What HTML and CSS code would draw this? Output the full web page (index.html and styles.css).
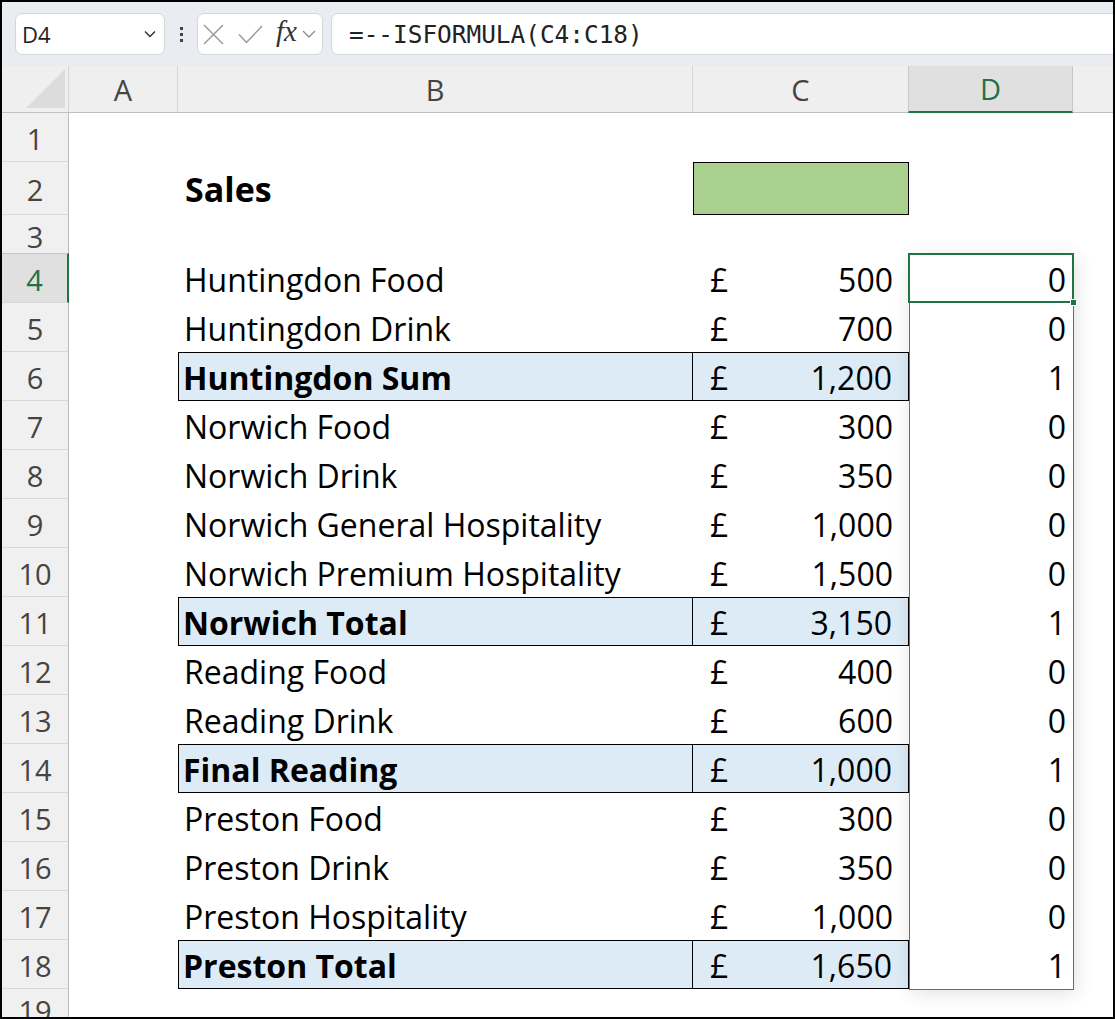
FILE: index.html
```html
<!DOCTYPE html>
<html>
<head>
<meta charset="utf-8">
<link rel="stylesheet" href="styles.css">
</head>
<body>
<div class="frame">
  <div class="fbar">
    <div class="namebox">
      <span class="nb-text">D4</span>
      <svg class="nb-chev" width="12" height="8" viewBox="0 0 12 8"><path d="M1 1.5 L6 6.5 L11 1.5" fill="none" stroke="#333" stroke-width="1.5"/></svg>
    </div>
    <div class="dots"><i></i><i></i><i></i></div>
    <div class="fxbox">
      <svg class="ic-x" width="21" height="21" viewBox="0 0 21 21"><path d="M1 1 L20 20 M20 1 L1 20" stroke="#9a9a9a" stroke-width="1.5" fill="none"/></svg>
      <svg class="ic-check" width="25" height="20" viewBox="0 0 25 20"><path d="M1 10.5 L8.5 18.5 L24 2" stroke="#9a9a9a" stroke-width="1.5" fill="none"/></svg>
      <span class="fx">fx</span>
      <svg class="fx-chev" width="14" height="8" viewBox="0 0 14 8"><path d="M1 1 L7 7 L13 1" fill="none" stroke="#8c8c8c" stroke-width="1.3"/></svg>
    </div>
    <div class="formula">=--ISFORMULA(C4:C18)</div>
  </div>

  <div class="sheet">
    <div class="row hdr">
      <div class="corner"><svg width="40" height="40" viewBox="0 0 40 40"><path d="M0 39 L39 0 L39 39 Z" fill="#dcdcdc"/></svg></div>
      <div class="ch">A</div>
      <div class="ch">B</div>
      <div class="ch">C</div>
      <div class="ch sel">D</div>
      <div class="ch last"></div>
    </div>

    <div class="row r1"><div class="rh">1</div><div class="c"></div><div class="c"></div><div class="c"></div><div class="c"></div><div class="c"></div></div>
    <div class="row r2"><div class="rh">2</div><div class="c"></div><div class="c b title">Sales</div><div class="c green"></div><div class="c"></div><div class="c"></div></div>
    <div class="row r3"><div class="rh">3</div><div class="c"></div><div class="c"></div><div class="c"></div><div class="c"></div><div class="c"></div></div>

    <div class="row"><div class="rh sel">4</div><div class="c"></div><div class="c b">Huntingdon Food</div><div class="c cc"><span>£</span><span>500</span></div><div class="c d">0</div><div class="c"></div></div>
    <div class="row"><div class="rh">5</div><div class="c"></div><div class="c b">Huntingdon Drink</div><div class="c cc"><span>£</span><span>700</span></div><div class="c d">0</div><div class="c"></div></div>
    <div class="row tot"><div class="rh">6</div><div class="c"></div><div class="c b">Huntingdon Sum</div><div class="c cc"><span>£</span><span>1,200</span></div><div class="c d">1</div><div class="c"></div></div>
    <div class="row"><div class="rh">7</div><div class="c"></div><div class="c b">Norwich Food</div><div class="c cc"><span>£</span><span>300</span></div><div class="c d">0</div><div class="c"></div></div>
    <div class="row"><div class="rh">8</div><div class="c"></div><div class="c b">Norwich Drink</div><div class="c cc"><span>£</span><span>350</span></div><div class="c d">0</div><div class="c"></div></div>
    <div class="row"><div class="rh">9</div><div class="c"></div><div class="c b">Norwich General Hospitality</div><div class="c cc"><span>£</span><span>1,000</span></div><div class="c d">0</div><div class="c"></div></div>
    <div class="row"><div class="rh">10</div><div class="c"></div><div class="c b">Norwich Premium Hospitality</div><div class="c cc"><span>£</span><span>1,500</span></div><div class="c d">0</div><div class="c"></div></div>
    <div class="row tot"><div class="rh">11</div><div class="c"></div><div class="c b">Norwich Total</div><div class="c cc"><span>£</span><span>3,150</span></div><div class="c d">1</div><div class="c"></div></div>
    <div class="row"><div class="rh">12</div><div class="c"></div><div class="c b">Reading Food</div><div class="c cc"><span>£</span><span>400</span></div><div class="c d">0</div><div class="c"></div></div>
    <div class="row"><div class="rh">13</div><div class="c"></div><div class="c b">Reading Drink</div><div class="c cc"><span>£</span><span>600</span></div><div class="c d">0</div><div class="c"></div></div>
    <div class="row tot"><div class="rh">14</div><div class="c"></div><div class="c b">Final Reading</div><div class="c cc"><span>£</span><span>1,000</span></div><div class="c d">1</div><div class="c"></div></div>
    <div class="row"><div class="rh">15</div><div class="c"></div><div class="c b">Preston Food</div><div class="c cc"><span>£</span><span>300</span></div><div class="c d">0</div><div class="c"></div></div>
    <div class="row"><div class="rh">16</div><div class="c"></div><div class="c b">Preston Drink</div><div class="c cc"><span>£</span><span>350</span></div><div class="c d">0</div><div class="c"></div></div>
    <div class="row"><div class="rh">17</div><div class="c"></div><div class="c b">Preston Hospitality</div><div class="c cc"><span>£</span><span>1,000</span></div><div class="c d">0</div><div class="c"></div></div>
    <div class="row tot"><div class="rh">18</div><div class="c"></div><div class="c b">Preston Total</div><div class="c cc"><span>£</span><span>1,650</span></div><div class="c d">1</div><div class="c"></div></div>
    <div class="row r19"><div class="rh">19</div><div class="c"></div><div class="c"></div><div class="c"></div><div class="c"></div><div class="c"></div></div>

    <div class="spill"></div>
    <div class="active"></div>
    <div class="handle"></div>
  </div>
</div>
</body>
</html>
```

FILE: styles.css
```css
* { box-sizing: border-box; }
html, body { margin: 0; padding: 0; background: #fff; }
.frame {
  width: 1115px;
  height: 1019px;
  border: 2px solid #000;
  overflow: hidden;
  background: #fff;
  font-family: "Open Sans", sans-serif;
}

/* formula bar */
.fbar {
  height: 64px;
  background: #e9ecf0;
  display: flex;
  align-items: flex-start;
  padding: 11px 0 0 13px;
}
.namebox {
  width: 150px;
  height: 42px;
  background: #fff;
  border: 1px solid #d3d6da;
  border-radius: 7px;
  display: flex;
  align-items: center;
  justify-content: space-between;
  padding: 0 8px 0 6px;
}
.nb-text { font-size: 22px; color: #222; }
.dots {
  width: 32px;
  height: 42px;
  display: flex;
  flex-direction: column;
  align-items: center;
  justify-content: center;
  gap: 3px;
}
.dots i { display: block; width: 3px; height: 3px; background: #444; }
.fxbox {
  width: 126px;
  height: 42px;
  background: #fff;
  border: 1px solid #d3d6da;
  border-radius: 7px;
  display: flex;
  align-items: center;
  padding-left: 5px;
}
.ic-x { margin-right: 14px; }
.ic-check { margin-right: 13px; }
.fx {
  font-family: "Liberation Serif", "DejaVu Serif", serif;
  font-style: italic;
  font-size: 29px;
  color: #333;
  margin-right: 5px;
  line-height: 1;
  margin-top: -5px;
}
.formula {
  flex: 1;
  height: 42px;
  margin-left: 8px;
  margin-right: -12px;
  background: #fff;
  border: 1px solid #d3d6da;
  border-radius: 7px;
  display: flex;
  align-items: center;
  padding-left: 17px;
  font-family: "DejaVu Sans Mono", "Liberation Mono", monospace;
  font-size: 24.4px;
  color: #222;
}

/* sheet */
.sheet { position: relative; }
.row {
  display: grid;
  grid-template-columns: 67px 109px 515px 216px 164px 40px;
  height: 49px;
}
.row.hdr { height: 47px; background: #efefef; border-bottom: 1px solid #c0c0c0; }
.row.r1 { height: 49px; }
.row.r2 { height: 53px; }
.row.r3 { height: 39px; }
.row.r19 { height: 40px; }

.corner {
  display: flex;
  align-items: flex-end;
  justify-content: flex-end;
  padding: 0 2px 3px 0;
  border-right: 1px solid #d6d6d6;
}
.ch {
  display: flex;
  align-items: center;
  justify-content: center;
  font-size: 29px;
  color: #444;
  border-right: 1px solid #d6d6d6;
}
.ch.sel {
  background: #e0e0e0;
  color: #217346;
  border-left: 1px solid #c6c6c6;
  border-right: 1px solid #c6c6c6;
  border-bottom: 2px solid #217346;
  margin-bottom: -1px;
  margin-left: -1px;
}
.ch.last { border-right: none; }

.rh {
  background: #f0f0f0;
  border-right: 1px solid #bdbdbd;
  border-bottom: 1px solid #d8d8d8;
  display: flex;
  align-items: center;
  justify-content: center;
  font-size: 29px;
  color: #444;
  padding-top: 2px;
}
.rh.sel {
  background: #e0e0e0;
  color: #217346;
  border-right: 2px solid #217346;
  border-top: 1px solid #c6c6c6;
  margin-top: -1px;
}

.c {
  display: flex;
  align-items: center;
  font-size: 32px;
  color: #000;
  line-height: 1;
  white-space: nowrap;
  padding-top: 3px;
}
.c.b { padding-left: 6px; }
.c.title { font-weight: 700; font-size: 34px; padding-top: 1px; padding-left: 7px; }
.c.green {
  background: #a9d08e;
  border: 1px solid #000;
}
.c.cc {
  justify-content: space-between;
  padding-left: 17px;
  padding-right: 16px;
}
.c.d { justify-content: flex-end; padding-right: 7px; }

.row.tot .c.b,
.row.tot .c.cc {
  background: #ddebf7;
  border: 1px solid #000;
  font-weight: 700;
}
.row.tot .c.cc { border-left: none; font-weight: 400; }
.row.tot .c.b { padding-left: 4px; }

.spill {
  position: absolute;
  left: 907px;
  top: 188px;
  width: 165px;
  height: 736px;
  border: 1px solid #3d6fd1;
  box-shadow: 2px 3px 18px rgba(0,0,0,0.12);
}
.active {
  position: absolute;
  left: 906px;
  top: 187px;
  width: 166px;
  height: 50px;
  border: 2px solid #217346;
}
.handle {
  position: absolute;
  left: 1068px;
  top: 233px;
  width: 7px;
  height: 7px;
  background: #217346;
  border: 1px solid #fff;
}
```
